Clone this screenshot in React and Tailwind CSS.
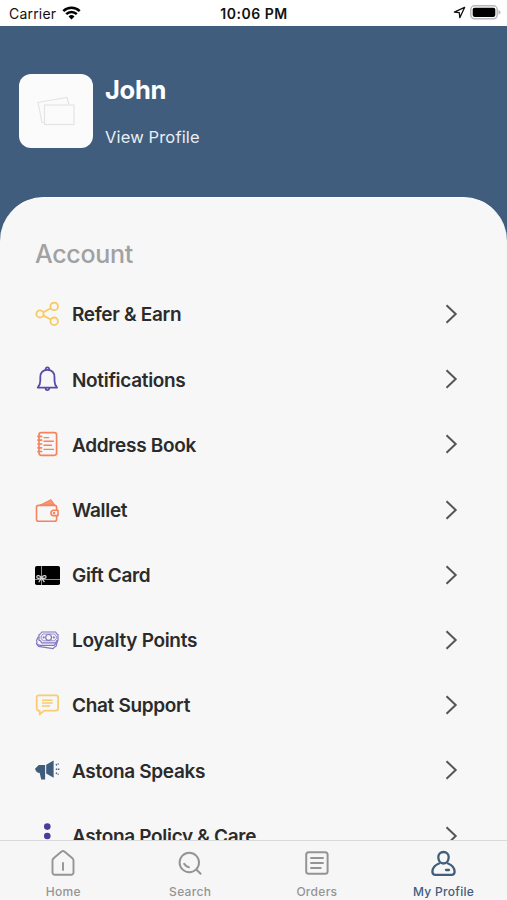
import { useState } from "react";

function ShareIcon() {
  return (
    <svg width="26" height="26" viewBox="0 0 26 26" fill="none" stroke="#f8ca62" strokeWidth="1.8">
      <circle cx="6" cy="12.9" r="3.6" />
      <circle cx="20.2" cy="5.4" r="3.8" />
      <circle cx="20.2" cy="20.3" r="3.8" />
      <path d="M9.3 11.2l7.5-3.9M9.3 14.6l7.5 3.9" />
    </svg>
  );
}

function BellIcon() {
  return (
    <svg width="26" height="26" viewBox="0 0 26 26" fill="none" stroke="#594aa8" strokeWidth="1.8" strokeLinejoin="round" strokeLinecap="round">
      <path d="M3.7 21.6c2.2-2.2 2.6-3.8 2.6-6.8v-3.4c0-4.8 2.6-7.6 7.1-7.6s7.1 2.800 7.100 7.600v3.400c0 3 .4 4.600 2.600 6.800z" />
      <path d="M11.800 3.600a1.700 1.700 0 1 1 3.200 0M11.600 22.300a1.800 1.800 0 0 0 3.600 0" />
    </svg>
  );
}

function BookIcon() {
  return (
    <svg width="26" height="26" viewBox="0 0 26 26" fill="none" stroke="#f4845d" strokeWidth="1.7" strokeLinecap="round">
      <rect x="5" y="1.7" width="17.6" height="22.6" rx="2.2" />
      <path d="M4 5.4h3.600M4 9.200h3.600M4 13h3.600M4 16.800h3.600M4 20.500h3.600" />
      <path d="M10 6.600h4.600M10 10.300h9.400M10 14.300h7.400M10 18.400h9.400" strokeWidth="1.4" />
    </svg>
  );
}

function WalletIcon() {
  return (
    <svg width="26" height="26" viewBox="0 0 26 26" fill="none" stroke="#f4845d" strokeWidth="1.600" strokeLinejoin="round">
      <path d="M6 8.200L17 2.600l4 5.600z" fill="#f4845d" fillOpacity="0.85" strokeWidth="1" />
      <path d="M22.600 13.200V10.400a2 2 0 0 0-2-2H4.500a2 2 0 0 0-2 2v11.800a2 2 0 0 0 2 2h16.100a2 2 0 0 0 2-2v-3.400" />
      <path d="M19.600 13.300h4.400v5.300h-4.400a2.650 2.650 0 0 1 0-5.300z" />
      <circle cx="20" cy="16" r="0.500" />
    </svg>
  );
}

function GiftCardIcon() {
  return (
    <svg width="26" height="26" viewBox="0 0 26 26" fill="none" stroke="#d9d9d9" strokeWidth="1.200">
      <rect x="1" y="4" width="25" height="19" rx="1.800" fill="#000" stroke="none" />
      <path d="M7.500 4v19M1 17.500h25" stroke="#8d8d8d" strokeWidth="1" />
      <path d="M7.200 15.600c-1.200-2.400-4.400-2.700-4.400-.7 0 1.800 2.700 1.800 4.400.7zM7.600 15.600c1.200-2.400 4.400-2.700 4.400-.7 0 1.800-2.700 1.800-4.400.7zM7.200 16.200l-2.400 4M7.800 16.200l2.600 4" />
    </svg>
  );
}

function LoyaltyIcon() {
  return (
    <svg width="26" height="26" viewBox="0 0 26 26" fill="none" stroke="#8075c2" strokeWidth="1.200" strokeLinejoin="round">
      <path d="M7.600 5h14.200c.2 1.500 1 2.400 2.200 2.600v5.600c-1.200.2-2 1.100-2.200 2.600H7.600c-.3-1.500-1.100-2.400-2.600-2.600V7.600C6.500 7.400 7.300 6.500 7.600 5z" />
      <path d="M9 7h11.600c.3 1 .9 1.600 1.700 1.900v3c-.8.300-1.400.9-1.700 1.900H9c-.3-1-.9-1.600-1.900-1.900v-3C8.100 8.600 8.700 8 9 7z" strokeWidth="0.800" />
      <circle cx="14.600" cy="10.400" r="2.900" />
      <circle cx="9.700" cy="10.400" r="0.500" />
      <circle cx="19.800" cy="10.400" r="0.500" />
      <path d="M4.500 9.500l-2 4c.8 1 .8 2-.1 3.400l3.300 1.400h14.500c.8-1.700 1.300-2.200 2.900-2.500l.5-2.500" />
      <path d="M3 17.500l1.500 1.900 14.600 2.200c1-1.500 1.500-2 2.900-2.200l.8-3" />
    </svg>
  );
}

function ChatIcon() {
  return (
    <svg width="26" height="26" viewBox="0 0 26 26" fill="none" stroke="#f8cc70" strokeWidth="1.800" strokeLinejoin="round">
      <path d="M4.700 3.300h17.400a2 2 0 0 1 2 2v11.300a2 2 0 0 1-2 2H10.200l-4.500 3.800v-3.800h-1a2 2 0 0 1-2-2V5.300a2 2 0 0 1 2-2z" />
      <path d="M8 8.200h10.600M8 11.100h10.600M8 14h8" strokeWidth="1.500" />
    </svg>
  );
}

function SpeakerIcon() {
  return (
    <svg width="26" height="26" viewBox="0 0 26 26" fill="#405c7d">
      <path d="M1 11.800L4.800 8h6.300v14.400H7.200l-1.500-6.300C3.400 15.800 2 14.800 1 11.800z" />
      <path d="M12.200 7.700l7.400-4.200v17.300l-7.400-4.400z" />
      <path d="M21.800 8.200l2.800-1.600M21.800 12.200h3.600M21.800 15.900l2.800 1.600" stroke="#405c7d" strokeWidth="1.400" strokeDasharray="1.500 0.800" />
    </svg>
  );
}

function DotsIcon() {
  return (
    <svg width="26" height="26" viewBox="0 0 26 26" fill="#4b3b9c">
      <circle cx="13.300" cy="3.600" r="3.300" />
      <circle cx="13.300" cy="13" r="3.300" />
      <circle cx="13.300" cy="22.400" r="3.300" />
    </svg>
  );
}

function HomeIcon() {
  return (
    <svg width="28" height="28" viewBox="0 0 28 28" fill="none" stroke="currentColor" strokeWidth="1.900" strokeLinejoin="round" strokeLinecap="round">
      <path d="M3.500 11.500c0-1 .4-1.700 1.100-2.300l8-6.600a2.100 2.100 0 0 1 2.800 0l8 6.600c.7.600 1.100 1.300 1.100 2.300v12a2.300 2.300 0 0 1-2.300 2.300H5.800a2.300 2.300 0 0 1-2.300-2.300z" />
      <path d="M14 14v7" />
    </svg>
  );
}

function SearchIcon() {
  return (
    <svg width="28" height="28" viewBox="0 0 28 28" fill="none" stroke="currentColor" strokeWidth="2" strokeLinecap="round">
      <circle cx="13.300" cy="13.500" r="9.700" />
      <path d="M20.300 20.500l4.300 4.200M8.200 14.900c1.200 1.800 2.600 2.900 4.700 3.400" />
    </svg>
  );
}

function OrdersIcon() {
  return (
    <svg width="28" height="28" viewBox="0 0 28 28" fill="none" stroke="currentColor" strokeWidth="2" strokeLinecap="round">
      <rect x="3.200" y="3.300" width="21.400" height="21.400" rx="2.500" />
      <path d="M8 9h12M8 14h12M8 19h9.800" strokeWidth="1.900" />
    </svg>
  );
}

function ProfileIcon() {
  return (
    <svg width="28" height="28" viewBox="0 0 28 28" fill="none" stroke="currentColor" strokeWidth="2.300" strokeLinecap="round" strokeLinejoin="round">
      <path d="M13.500 3c3.200 0 5.200 2.200 5.200 5.100 0 3.500-2 6.400-5.200 6.400s-5.200-2.900-5.200-6.400C8.300 5.200 10.300 3 13.500 3z" />
      <path d="M9 14.500c-3.900 1.500-6.600 4.300-6.600 8.300 0 2 1 3 3 3h16.200c2 0 3-1 3-3 0-4-2.700-6.800-6.600-8.300" />
      <path d="M16 21h3" />
    </svg>
  );
}

const menu = [
  { label: "Refer & Earn", icon: ShareIcon },
  { label: "Notifications", icon: BellIcon },
  { label: "Address Book", icon: BookIcon },
  { label: "Wallet", icon: WalletIcon },
  { label: "Gift Card", icon: GiftCardIcon },
  { label: "Loyalty Points", icon: LoyaltyIcon },
  { label: "Chat Support", icon: ChatIcon },
  { label: "Astona Speaks", icon: SpeakerIcon },
  { label: "Astona Policy & Care", icon: DotsIcon },
];

const tabs = [
  { label: "Home", icon: HomeIcon },
  { label: "Search", icon: SearchIcon },
  { label: "Orders", icon: OrdersIcon },
  { label: "My Profile", icon: ProfileIcon },
];

function StatusBar() {
  return (
    <div className="h-[25.5px] shrink-0 bg-white text-[#111] grid grid-cols-3 items-center pl-[9px] pr-[6px] text-[14px]">
      <div className="flex items-center gap-[6px] pt-px">
        <span className="tracking-[0.2px]">Carrier</span>
        <svg width="19" height="14" viewBox="0 0 19 14" fill="none" stroke="#000" strokeWidth="2.500">
          <path d="M1.300 5.200a11.600 11.600 0 0 1 16.400 0M4.200 8.200a7.500 7.500 0 0 1 10.600 0" />
          <path d="M9.500 13.500L6.500 10.400a4.300 4.300 0 0 1 6 0z" fill="#000" stroke="none" />
        </svg>
      </div>
      <div className="text-center font-semibold tracking-[0.5px] pt-[2px] pr-[2px] whitespace-nowrap">10:06 PM</div>
      <div className="flex items-center justify-end gap-[4px]">
        <svg width="13" height="13" viewBox="0 0 13 13" fill="none" stroke="#111" strokeWidth="1.300" strokeLinejoin="round">
          <path d="M11.600 1.400L1.300 6.100l5 .6.500 5z" />
        </svg>
        <svg width="31" height="15" viewBox="0 0 31 15">
          <rect x="0.800" y="0.800" width="26.400" height="13" rx="3.800" fill="#fff" stroke="#b8b8b8" strokeWidth="1.500" />
          <rect x="2.700" y="2.700" width="22.600" height="9.200" rx="1.800" fill="#000" />
          <path d="M28.500 5v4.600c1.300-.4 2-1.200 2-2.300s-.7-1.900-2-2.300z" fill="#b8b8b8" />
        </svg>
      </div>
    </div>
  );
}

function App() {
  const [active, setActive] = useState("My Profile");

  return (
    <div className="w-[507px] h-[900px] overflow-hidden flex flex-col bg-[#405d7d] font-['Inter','Liberation_Sans',sans-serif]">
      <StatusBar />

      {/* Profile header */}
      <div className="h-[171px] shrink-0 flex items-start gap-[12px] pl-[19px] pt-[48.5px] text-white">
        <div className="w-[74px] h-[74px] rounded-[12px] bg-[#fbfbfb] flex items-center justify-center">
          <svg width="38" height="30" viewBox="0 0 38 30" fill="#fbfbfb" stroke="#e4e4e4" strokeWidth="1.200">
            <path d="M1 6.500L30 1.500l2 7v18H5z" />
            <rect x="7.500" y="9" width="29.500" height="19.500" />
          </svg>
        </div>
        <div>
          <div className="text-[25.5px] leading-[32px] font-bold tracking-[-0.300px]">John</div>
          <div className="mt-[20px] text-[16.500px] leading-[22px] tracking-[0.150px] text-[#e9eef5]">View Profile</div>
        </div>
      </div>

      {/* Menu */}
      <div className="flex-1 min-h-0 overflow-hidden rounded-t-[44px] bg-[#f7f7f7] border-t border-white pt-[40px]">
        <h2 className="pl-[35px] text-[25px] leading-[32px] tracking-[-0.300px] font-medium text-[#a1a1a1]">Account</h2>
        <ul className="mt-[12px]">
          {menu.map(({ label, icon: Icon }) => (
            <li key={label} className="h-[65.200px] flex items-center pl-[34px] pr-[49px]">
              <Icon />
              <span className="ml-[12px] flex-1 pt-[3px] text-[19px] font-semibold tracking-[-0.320px] text-[#2b2b2b]">{label}</span>
              <svg width="14" height="20" viewBox="0 0 14 20" fill="none" stroke="#555" strokeWidth="2">
                <path d="M2.500 1.200L11.700 10l-9.200 8.800" />
              </svg>
            </li>
          ))}
        </ul>
      </div>

      {/* Bottom tabs */}
      <div className="h-[60px] shrink-0 grid grid-cols-4 bg-[#f6f6f7] border-t border-[#dadadb]">
        {tabs.map(({ label, icon: Icon }) => (
          <button
            key={label}
            onClick={() => setActive(label)}
            className={`flex flex-col items-center pt-[8px] ${active === label ? "text-[#405d7d]" : "text-[#949494]"}`}
          >
            <Icon />
            <span className="mt-[6px] pt-px text-[12px] leading-[16px] tracking-[0.300px] font-medium">{label}</span>
          </button>
        ))}
      </div>
    </div>
  );
}

export default App;
